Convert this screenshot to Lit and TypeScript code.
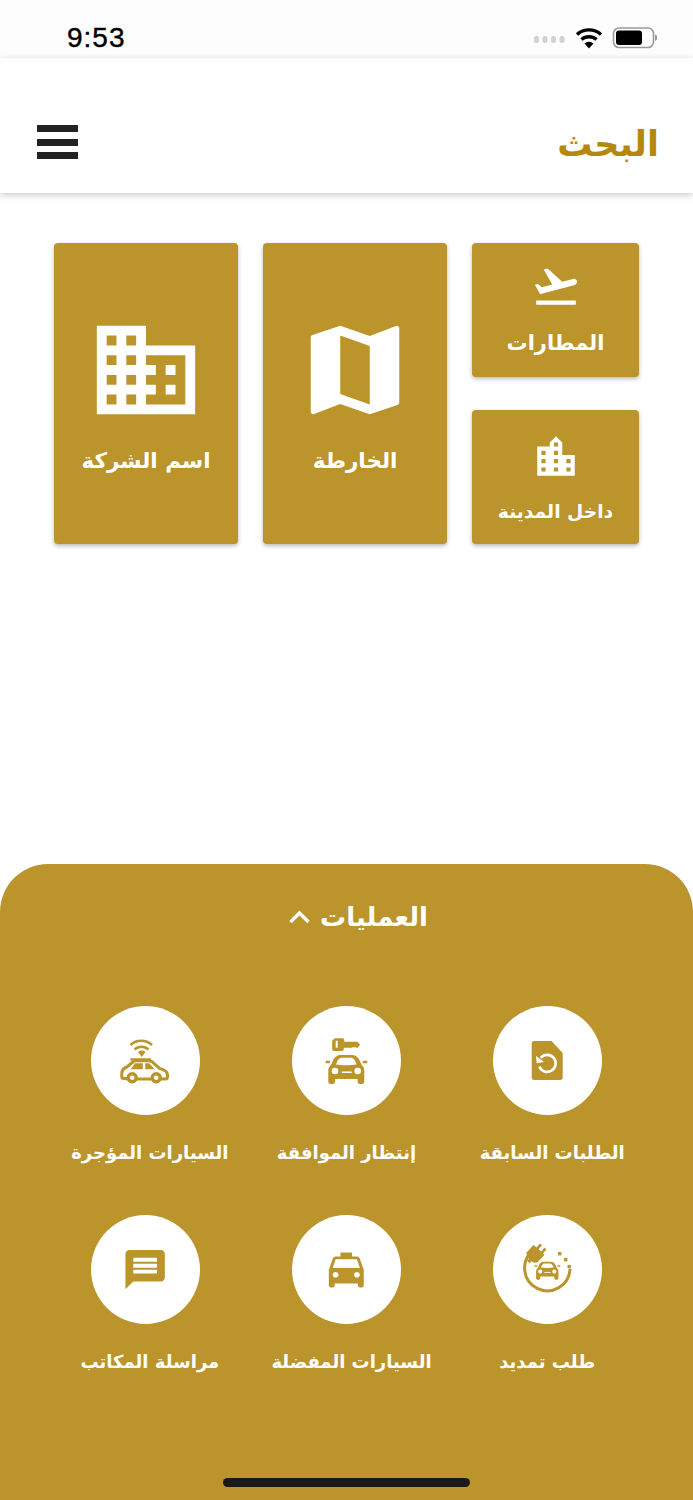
import { LitElement, html, css, svg } from "lit";
import { customElement } from "lit/decorators.js";

const G = "#bb942b";
const carFront = svg`
  <path fill="${G}" d="M33.700 54.700h4.300v2.600h-4.300zM70.700 54.700h4.600v2.600h-4.600z"/>
  <path fill="${G}" d="M49 49h10.600c4 0 6.400 2 7.800 5l2.200 4.800c1.800 2 2.700 3.700 2.700 5.700v11c0 1.500-.8 2.500-2.200 2.500h-2.300c-1.400 0-2.200-1-2.200-2.500v-2.500h-22.600v2.500c0 1.500-.8 2.500-2.200 2.500h-2.300c-1.400 0-2.200-1-2.200-2.500v-11c0-2 .9-3.700 2.700-5.700l2.200-4.800c1.400-3 3.800-5 7.800-5z"/>
  <path fill="#fff" d="M44 58.500c1.500-4 3-6.700 6-6.700h8.600c3 0 4.500 2.700 6 6.700c-6 1-14.500 1-20.600 0z"/>
  <circle cx="43" cy="65" r="3.300" fill="#fff"/><circle cx="65.700" cy="65" r="3.300" fill="#fff"/>
  <rect x="49.700" y="65.500" width="10" height="1.500" fill="#fff"/>`;

const icons = {
  history: svg`
    <path fill="${G}" d="M41 35h17.500l11.200 12v24.500c0 1.500-1 2.500-2.500 2.500H41c-1.500 0-2.300-1-2.300-2.500V37.500C38.700 36 39.500 35 41 35z"/>
    <path fill="none" stroke="#fff" stroke-width="2.600" d="M47.800 51.800A8.500 8.500 0 1 1 46.300 60.500"/>
    <polygon fill="#fff" points="43,50 43.700,57.300 51,56"/>`,
  key: svg`
    <path fill="${G}" d="M42.500 32.300h8c1 0 1.700.7 1.700 1.700v1.700h13l3 2.800-2.500 3.200h-1.500l-1-1-1 1-1-1-1 1h-8.500v1.500c0 1-.7 1.700-1.700 1.700h-8c-1 0-1.800-.7-1.800-1.700v-8.200c0-1 .8-1.700 1.800-1.700z"/>
    <rect x="43.700" y="34.700" width="2" height="7" fill="#fff"/>
    ${carFront}`,
  wifiCar: svg`
    <g fill="none" stroke="${G}" stroke-width="2.500">
      <path d="M39.500 39A16 16 0 0 1 61 39"/>
      <path d="M43.500 43.500A10 10 0 0 1 57.500 43.500"/>
    </g>
    <path fill="${G}" d="M47 46a5.500 5.500 0 0 1 7.500 0l-3.750 5zM39.500 52.300h20.500v2.500H39.500z"/>
    <path fill="#fff" stroke="${G}" stroke-width="3" stroke-linejoin="round" d="M36 72.500H32.500c-1 0-1.700-.7-1.700-2v-3c0-3 1-5 5-6.500L42 56c1-1 2-1.300 3-1.300h13c1 0 2 .3 3 1L68.500 62.300l4 1.500c2.500 1 4 2.700 4 5.200v1.500c0 1.500-.7 2.500-2 2.500H36z"/>
    <path fill="${G}" d="M44 57.300h7.800v6h-12zM54.200 57.300h4l5.300 6h-9.300z"/>
    <g fill="#fff" stroke="${G}" stroke-width="3.400"><circle cx="41.200" cy="71.700" r="4"/><circle cx="65.200" cy="71.700" r="4"/></g>`,
  plug: svg`
    <path fill="none" stroke="${G}" stroke-width="3" d="M40 35.500A22.700 22.700 0 1 0 77 54"/>
    <path fill="${G}" d="M33 38l7.500-8 3 2.500 3.500-4 2 1.800-3.500 4 2.500 2.300 3.500-4 2 1.800-3.500 4 1.500 1.400-6.500 7c-2.500 1.500-4.800 1-6.500-.5l-2 2-2.500-2.500 2-2c-1.500-2-1.500-3.500-2-4.500z"/>
    <g fill="${G}"><rect x="65" y="37" width="3.400" height="3.400"/><rect x="71" y="43" width="3.400" height="3.400"/><rect x="74.500" y="50" width="3.400" height="3.400"/></g>
    <g transform="translate(20.600 16.300) scale(.62)">${carFront}</g>`,
  taxi: svg`<g transform="translate(31 31.700) scale(1.940)"><path fill="${G}" d="M18.920 6.010C18.720 5.420 18.160 5 17.500 5H15V3H9v2H6.500c-.66 0-1.210.42-1.420 1.010L3 12v8c0 .55.45 1 1 1h1c.55 0 1-.45 1-1v-1h12v1c0 .55.45 1 1 1h1c.55 0 1-.45 1-1v-8l-2.080-5.990zM6.500 16c-.83 0-1.500-.67-1.500-1.500S5.670 13 6.500 13s1.500.67 1.500 1.500S7.330 16 6.500 16zm11 0c-.83 0-1.500-.67-1.500-1.500s.67-1.500 1.500-1.500 1.500.67 1.500 1.500-.67 1.500-1.500 1.500zM5 11l1.500-4.500h11L19 11H5z"/></g>`,
  chat: svg`<g transform="translate(30.500 31) scale(1.970)"><path fill="${G}" d="M20 2H4c-1.100 0-1.990.9-1.990 2L2 22l4-4h14c1.100 0 2-.9 2-2V4c0-1.100-.9-2-2-2zm-2 12H6v-2h12v2zm0-3H6V9h12v2zm0-3H6V6h12v2z"/></g>`,
};

const domain = "M12 7V3H2v18h20V7H12zM6 19H4v-2h2v2zm0-4H4v-2h2v2zm0-4H4V9h2v2zm0-4H4V5h2v2zm4 12H8v-2h2v2zm0-4H8v-2h2v2zm0-4H8V9h2v2zm0-4H8V5h2v2zm10 12h-8v-2h2v-2h-2v-2h2v-2h-2V9h8v10zm-2-8h-2v2h2v-2zm0 4h-2v2h2v-2z";
const mapIcon = "M20.500 3l-.16.03L15 5.100 9 3 3.360 4.900c-.21.07-.36.25-.36.48V20.500c0 .28.22.5.5.5l.16-.03L9 18.900l6 2.100 5.640-1.900c.21-.07.36-.25.36-.48V3.500c0-.28-.22-.5-.5-.5zM15 19l-6-2.110V5l6 2.110V19z";
const takeoff = "M2.500 19h19v2h-19zm19.570-9.360c-.21-.8-1.040-1.280-1.840-1.060L14.920 10l-6.900-6.430-1.930.51 4.140 7.170-4.970 1.330-1.970-1.540-1.450.39 1.820 3.160.77 1.330 1.600-.43 5.310-1.420 4.350-1.160L21 11.490c.81-.23 1.280-1.050 1.070-1.850z";
const city = "M15 11V5l-3-3-3 3v2H3v14h18V11h-6zm-8 8H5v-2h2v2zm0-4H5v-2h2v2zm0-4H5V9h2v2zm6 8h-2v-2h2v2zm0-4h-2v-2h2v2zm0-4h-2V9h2v2zm0-4h-2V5h2v2zm6 12h-2v-2h2v2zm0-4h-2v-2h2v2z";

const ops = [
  { label: "السيارات المؤجرة", icon: icons.wifiCar, shift: 4 },
  { label: "إنتظار الموافقة", icon: icons.key, shift: 0 },
  { label: "الطلبات السابقة", icon: icons.history, shift: 5 },
  { label: "مراسلة المكاتب", icon: icons.chat, shift: 4 },
  { label: "السيارات المفضلة", icon: icons.taxi, shift: 5 },
  { label: "طلب تمديد", icon: icons.plug, shift: 0 },
];

@customElement("app-root")
export class AppRoot extends LitElement {
  static styles = css`
    :host { display: flex; flex-direction: column; width: 693px; height: 1500px; background: #fff; overflow: hidden; font-family: "DejaVu Sans", sans-serif; }
    .status { height: 58px; flex: none; background: #fdfdfd; display: flex; align-items: center; padding: 0 36px 0 67px; box-sizing: border-box; }
    .time { font: 400 28px "Liberation Sans", sans-serif; letter-spacing: 1px; -webkit-text-stroke: 0.4px #000; color: #000; margin-top: 18px; line-height: 40px; }
    .status-icons { margin-left: auto; margin-top: 18px; display: flex; }
    .header { height: 135px; flex: none; background: #fff; box-shadow: 0 2px 7px rgba(0,0,0,.22); display: flex; align-items: flex-start; justify-content: space-between; padding: 0 34px 0 37px; box-sizing: border-box; position: relative; z-index: 1; }
    .burger { display: flex; flex-direction: column; gap: 6.500px; width: 40.500px; margin-top: 67px; }
    .burger i { display: block; height: 7px; background: #222; }
    .title { font-size: 35px; font-weight: 700; color: #b5880d; line-height: 50px; margin-top: 60.500px; }
    .tiles { flex: 1; display: grid; grid-template-columns: 184px 184px 167px; grid-template-rows: 134px 134px; column-gap: 25px; row-gap: 33px; padding: 50px 0 0 54px; align-content: start; }
    .tile { background: #bb942b; border-radius: 4px; box-shadow: 0 2px 4px rgba(0,0,0,.28); display: flex; flex-direction: column; align-items: center; color: #fff; font-weight: 700; box-sizing: border-box; }
    .tile.tall { grid-row: span 2; padding-top: 68px; }
    .tile svg { display: block; fill: #fff; }
    .tile span { display: block; line-height: 30px; white-space: nowrap; }
    .tall span { font-size: 21.500px; margin-top: 17px; }
    .air { padding-top: 18px; }
    .air span { font-size: 21px; margin-top: 17px; }
    .town { padding-top: 21.500px; }
    .town span { font-size: 18.700px; margin-top: 15px; }
    .sheet { height: 636px; flex: none; background: #bb942b; border-radius: 48px 48px 0 0; box-sizing: border-box; display: flex; flex-direction: column; align-items: center; color: #fff; }
    .sheet-head { display: flex; align-items: center; gap: 10px; margin-top: 34px; height: 38px; font-size: 26px; font-weight: 700; line-height: 38px; transform: translateX(11.500px); }
    .ops { width: 602px; margin-top: 70px; display: grid; grid-template-columns: repeat(3, 1fr); justify-items: center; }
    .op { height: 209px; display: flex; flex-direction: column; align-items: center; width: 200px; }
    .circle { width: 109px; height: 109px; border-radius: 50%; background: #fff; flex: none; }
    .circle svg { display: block; }
    .op span { font-size: 18px; font-weight: 700; line-height: 30px; margin-top: 23px; white-space: nowrap; }
    .home { width: 247px; height: 9px; border-radius: 5px; background: #1a1a1a; margin-top: auto; margin-bottom: 13px; }
  `;

  render() {
    return html`
      <div class="status">
        <div class="time">9:53</div>
        <svg class="status-icons" width="123" height="24" viewBox="0 0 123 24">
          <g fill="#d2d2d2"><rect x="0" y="10" width="5" height="7" rx="2.200"/><rect x="8.500" y="10" width="5" height="7" rx="2.200"/><rect x="17" y="10" width="5" height="7" rx="2.200"/><rect x="25.500" y="10" width="5" height="7" rx="2.200"/></g>
          <g fill="none" stroke="#000" stroke-width="3.400"><path d="M43 8.500a18 18 0 0 1 24 0"/><path d="M47.500 13.500a11.500 11.500 0 0 1 15 0"/></g>
          <path d="M50.500 17.500a7 7 0 0 1 9 0l-4.500 5z"/>
          <rect x="79.500" y="2" width="40" height="19.500" rx="5.500" fill="none" stroke="#9a9a9a" stroke-width="1.600"/>
          <rect x="82" y="4.500" width="26" height="14.500" rx="3" fill="#000"/>
          <path d="M121 8.500c1.800.5 2.500 1.700 2.500 3.200s-.7 2.700-2.500 3.200z" fill="#9a9a9a"/>
        </svg>
      </div>
      <div class="header">
        <div class="burger"><i></i><i></i><i></i></div>
        <div class="title">البحث</div>
      </div>
      <div class="tiles">
        <div class="tile tall">
          <svg width="118" height="118" viewBox="0 0 24 24"><path d="${domain}"/></svg>
          <span>اسم الشركة</span>
        </div>
        <div class="tile tall">
          <svg width="118" height="118" viewBox="0 0 24 24"><path d="${mapIcon}"/></svg>
          <span>الخارطة</span>
        </div>
        <div class="tile air">
          <svg width="50" height="50" viewBox="0 0 24 24"><path d="${takeoff}"/></svg>
          <span>المطارات</span>
        </div>
        <div class="tile town">
          <svg width="50" height="50" viewBox="0 0 24 24"><path d="${city}"/></svg>
          <span>داخل المدينة</span>
        </div>
      </div>
      <div class="sheet">
        <div class="sheet-head">
          <svg width="22" height="14" viewBox="0 0 22 14"><path d="M2 12L11 3l9 9" fill="none" stroke="#fff" stroke-width="3.400"/></svg>
          <span>العمليات</span>
        </div>
        <div class="ops">
          ${ops.map(o => html`
            <div class="op">
              <div class="circle"><svg width="109" height="109" viewBox="0 0 109 109">${o.icon}</svg></div>
              <span style="transform:translateX(${o.shift}px)">${o.label}</span>
            </div>`)}
        </div>
        <div class="home"></div>
      </div>
    `;
  }
}
